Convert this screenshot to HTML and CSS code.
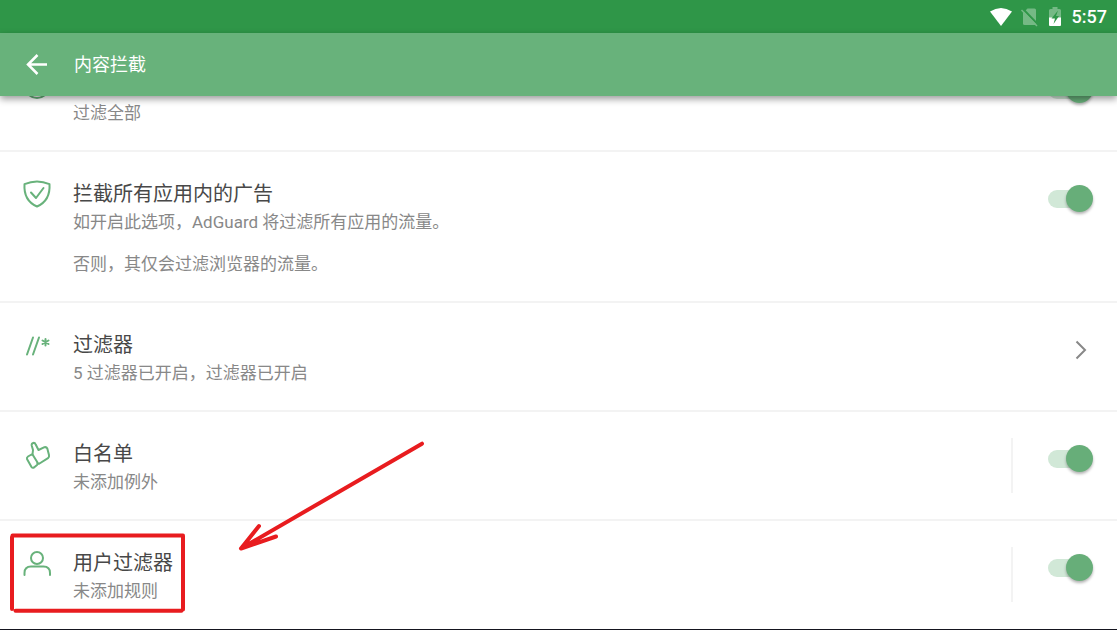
FILE: index.html
```html
<!DOCTYPE html>
<html lang="zh-CN">
<head>
<meta charset="utf-8">
<meta name="viewport" content="width=device-width, initial-scale=1">
<title>内容拦截</title>
<link rel="stylesheet" href="styles.css">
</head>
<body>
<div class="screen">
  <div class="status">
    <svg class="status-icons" width="74" height="22" viewBox="0 0 74 22" aria-hidden="true">
      <path d="M1 5.500Q12 -1.500 23 5.500L12 20Z" fill="#fff"/>
      <path d="M38.500 2.500H45.500Q47 2.500 47 4V17.500Q47 19 45.500 19H35.500Q34 19 34 17.500V7Z" fill="#75b985"/>
      <path d="M34 3L49 18.500" stroke="#2f9648" stroke-width="2"/>
      <path d="M32.500 4L48 20" stroke="#75b985" stroke-width="1.600"/>
      <path d="M60 4.500Q60 3 61.500 3H63.500V1H68.500V3H70.500Q72 3 72 4.500V12H60Z" fill="#75b985"/>
      <path d="M60 11.500H72V19Q72 20 71 20H61Q60 20 60 19Z" fill="#fff"/>
      <path d="M69 4.500L62.500 12.500H66L64.500 18L70 10H67Z" fill="#2f9648"/>
    </svg>
    <time class="clock">5:57</time>
  </div>
  <header class="appbar">
    <button class="back" type="button" aria-label="返回">
      <svg width="22" height="22" viewBox="0 0 22 22" aria-hidden="true"><path d="M11.500 1L2 10.500L11.500 20M2 10.500H21" fill="none" stroke="#fff" stroke-width="2.500"/></svg>
    </button>
    <h1 class="heading">内容拦截</h1>
  </header>
  <main class="viewport">
    <ul class="list">
      <li class="row">
        <svg class="icon" width="32" height="32" viewBox="0 0 32 32" aria-hidden="true"><circle cx="16" cy="17" r="12"/></svg>
        <div class="text"><div class="title"></div><label class="detail" for="all">过滤全部</label></div>
        <input class="toggle" type="checkbox" id="all" checked>
      </li>
      <li class="row">
        <svg class="icon" width="32" height="32" viewBox="0 0 32 32" aria-hidden="true"><path d="M16 3.500C20 3.500 25 4.700 28.500 6.200C29.200 17 25 24.500 16 28.500C7 24.500 2.800 17 3.500 6.200C7 4.700 12 3.500 16 3.500Z"/><path d="M10 14.500L15 20L22.500 10"/></svg>
        <div class="text"><label class="title" for="apps">拦截所有应用内的广告</label><p class="detail">如开启此选项，AdGuard 将过滤所有应用的流量。<br><br>否则，其仅会过滤浏览器的流量。</p></div>
        <input class="toggle" type="checkbox" id="apps" checked>
      </li>
      <li class="row">
        <svg class="icon" width="32" height="32" viewBox="0 0 32 32" aria-hidden="true"><path d="M12 8.500L6 25.500M18 8.500L12 25.500M24.500 10V16.500M21.500 11.500L27.500 15M27.500 11.500L21.500 15"/></svg>
        <div class="text"><h2 class="title">过滤器</h2><p class="detail">5 过滤器已开启，过滤器已开启</p></div>
        <button class="next" type="button" aria-label="过滤器"><svg width="12" height="20" viewBox="0 0 12 20" aria-hidden="true"><path d="M1.500 1.500L10 10L1.500 18.500" fill="none" stroke="#888" stroke-width="2"/></svg></button>
      </li>
      <li class="row">
        <svg class="icon" width="32" height="32" viewBox="0 0 32 32" aria-hidden="true"><path d="M11.500 16.500L12 12L10.700 7.500C10.300 4.500 13.700 4 14.700 6.500L17.500 12L23.500 9.200Q25.500 8.800 26.300 10.500L28 17Q28.500 19 27 20.200L18.500 25.500Q17 26 16.500 25"/><path d="M7 18.500L10.500 16.500Q11.500 16.500 12 17.200L16.500 24.500Q17 26 16 27L13 29.500Q11.500 30.300 10.500 29L6 21Q5.500 19.500 7 18.500Z"/></svg>
        <div class="text"><label class="title" for="white">白名单</label><p class="detail">未添加例外</p></div>
        <span class="divider"></span>
        <input class="toggle" type="checkbox" id="white" checked>
      </li>
      <li class="row">
        <svg class="icon" width="32" height="32" viewBox="0 0 32 32" aria-hidden="true"><circle cx="16" cy="11" r="6"/><path d="M3.500 28V26Q3.500 19.500 10 19.500H22.500Q29 19.500 29 26V28"/></svg>
        <div class="text"><label class="title" for="user">用户过滤器</label><p class="detail">未添加规则</p></div>
        <span class="divider"></span>
        <input class="toggle" type="checkbox" id="user" checked>
      </li>
    </ul>
  </main>
  <svg class="marks" width="430" height="630" viewBox="0 0 430 630" aria-hidden="true">
    <path d="M12 537V609M12.500 535.500H183M183 536V609.500M15.500 610.700H181.500"/>
    <path d="M422 443.700L241 548.500M259 526L241 548.500L276 536.500"/>
  </svg>
</div>
</body>
</html>
```
FILE: styles.css
```css
* {
  box-sizing: border-box;
}

body {
  margin: 0;
  background: #fff;
  font-family: Roboto, "Noto Sans CJK SC", sans-serif;
}

h1, h2, p, ul {
  margin: 0;
  padding: 0;
  font-weight: 400;
}

button {
  padding: 0;
  border: 0;
  background: none;
}

.screen {
  position: relative;
  display: flex;
  flex-direction: column;
  height: 100vh;
  overflow: hidden;
  border-bottom: 1px solid #15151f;
}

.status {
  display: flex;
  flex: none;
  align-items: center;
  justify-content: flex-end;
  gap: 9px;
  height: 33px;
  padding-right: 10px;
  background: #2f9648;
  color: #fff;
}

.clock {
  font-size: 18px;
  font-weight: 500;
  line-height: 22px;
}

.appbar {
  z-index: 1;
  display: flex;
  flex: none;
  align-items: center;
  gap: 26px;
  height: 63px;
  padding-left: 26px;
  background: #68b27b;
  box-shadow: 0 3px 7px rgba(0, 0, 0, 0.4);
}

.back, .back svg, .next svg {
  display: block;
}

.heading {
  color: #fff;
  font-size: 18px;
  line-height: 26px;
}

.viewport {
  flex: 1;
  min-height: 0;
  overflow: hidden;
}

/* The list is scrolled so that the first row starts under the app bar. */
.list {
  margin-top: -55px;
  list-style: none;
}

.row {
  display: flex;
  align-items: flex-start;
  padding: 26px 24px 26px 21px;
  border-top: 2px solid #f3f3f3;
}

.icon {
  flex: none;
  margin-right: 20px;
  fill: none;
  stroke: #68b27b;
  stroke-width: 2;
  stroke-linecap: round;
  stroke-linejoin: round;
}

.text {
  display: flex;
  flex: 1;
  flex-direction: column;
  gap: 3px;
  padding-top: 1px;
}

.title {
  min-height: 30px;
  color: #484848;
  font-size: 20px;
  line-height: 30px;
}

.detail {
  color: #888;
  font-size: 17px;
  line-height: 21px;
}

.divider {
  width: 2px;
  height: 55px;
  margin-right: 35px;
  background: #f3f3f3;
}

.toggle {
  display: grid;
  flex: none;
  align-items: center;
  width: 45px;
  height: 27px;
  margin: 7px 0 0;
  appearance: none;
}

.toggle::before, .toggle::after {
  grid-area: 1 / 1;
  content: "";
}

.toggle::before {
  width: 36px;
  height: 18px;
  border-radius: 9px;
  background: #d1e8d7;
}

.toggle::after {
  justify-self: end;
  width: 27px;
  height: 27px;
  border-radius: 50%;
  background: #67ae79;
  box-shadow: 0 2px 3px rgba(0, 0, 0, 0.3);
}

.next {
  margin: 11px 6px 0 0;
}

.marks {
  position: absolute;
  top: 0;
  left: 0;
  z-index: 2;
  fill: none;
  stroke: #e81c1f;
  stroke-width: 4;
  stroke-linecap: round;
  stroke-linejoin: round;
  pointer-events: none;
}
```
